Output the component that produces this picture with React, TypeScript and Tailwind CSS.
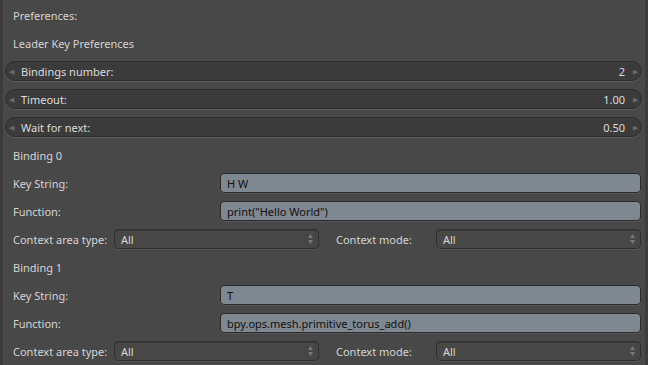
import React from "react";

const font = { fontFamily: '"Noto Sans", "Open Sans", sans-serif' };

const NumberField = ({ label, value }: { label: string; value: string }) => (
  <div className="h-7 flex items-center">
    <div className="relative flex-1 mr-[1px] h-5 rounded-full bg-[#3b3b3b] border border-[#2e2e2e] shadow-[0_1px_0_#5a5a5a] flex items-center text-[#dcdcdc]">
      <span className="text-[7px] text-[#6a6a6a] ml-[3px]">◀</span>
      <span className="ml-[7px] flex-1">{label}</span>
      <span className="mr-[8px]">{value}</span>
      <span className="text-[7px] text-[#6a6a6a] mr-[3px]">▶</span>
    </div>
  </div>
);

const TextRow = ({ label, value }: { label: string; value: string }) => (
  <div className="h-7 flex items-center">
    <div className="w-[215px] pl-2 text-[#d4d4d4]">{label}</div>
    <div className="flex-1 mr-[2px] h-5 rounded-[4px] bg-[#7f8791] border border-[#2b2b2b] shadow-[0_1px_0_#555] flex items-center px-[6px] text-[#111]">
      {value}
    </div>
  </div>
);

const Arrows = () => (
  <svg width="7" height="12" viewBox="0 0 7 12" className="ml-auto">
    <path d="M3.5 1 L6 5 L1 5 Z" fill="#7a7a7a" />
    <path d="M3.5 11 L6 7 L1 7 Z" fill="#7a7a7a" />
  </svg>
);

const Dropdown = ({ className }: { className: string }) => (
  <div
    className={`h-5 rounded-[4px] bg-[#474747] border border-[#303030] shadow-[inset_0_1px_0_#3a3a3a,0_1px_0_#555] flex items-center pl-[6px] pr-[4px] text-[#d8d8d8] ${className}`}
  >
    <span>All</span>
    <Arrows />
  </div>
);

const ContextRow = () => (
  <div className="h-7 flex items-center">
    <div className="w-[109px] pl-2 text-[#d4d4d4] whitespace-nowrap">Context area type:</div>
    <Dropdown className="w-[205px]" />
    <div className="w-[117px] pl-[17px] text-[#d4d4d4]">Context mode:</div>
    <Dropdown className="flex-1 mr-[2px]" />
  </div>
);

const Heading = ({ children }: { children: React.ReactNode }) => (
  <div className="h-7 flex items-center pl-2 text-[#d4d4d4]">{children}</div>
);

export default function App() {
  return (
    <div
      className="w-[648px] h-[365px] bg-[#484848] border-l-[3px] border-r-[3px] border-[#3c3c3c] overflow-hidden text-[11px] leading-none"
      style={font}
    >
      <div className="pl-[2px] pr-[2px] pt-[1px]">
        <Heading>Preferences:</Heading>
        <Heading>Leader Key Preferences</Heading>
        <NumberField label="Bindings number:" value="2" />
        <NumberField label="Timeout:" value="1.00" />
        <NumberField label="Wait for next:" value="0.50" />
        <Heading>Binding 0</Heading>
        <TextRow label="Key String:" value="H W" />
        <TextRow label="Function:" value={'print("Hello World")'} />
        <ContextRow />
        <Heading>Binding 1</Heading>
        <TextRow label="Key String:" value="T" />
        <TextRow label="Function:" value="bpy.ops.mesh.primitive_torus_add()" />
        <ContextRow />
      </div>
    </div>
  );
}
